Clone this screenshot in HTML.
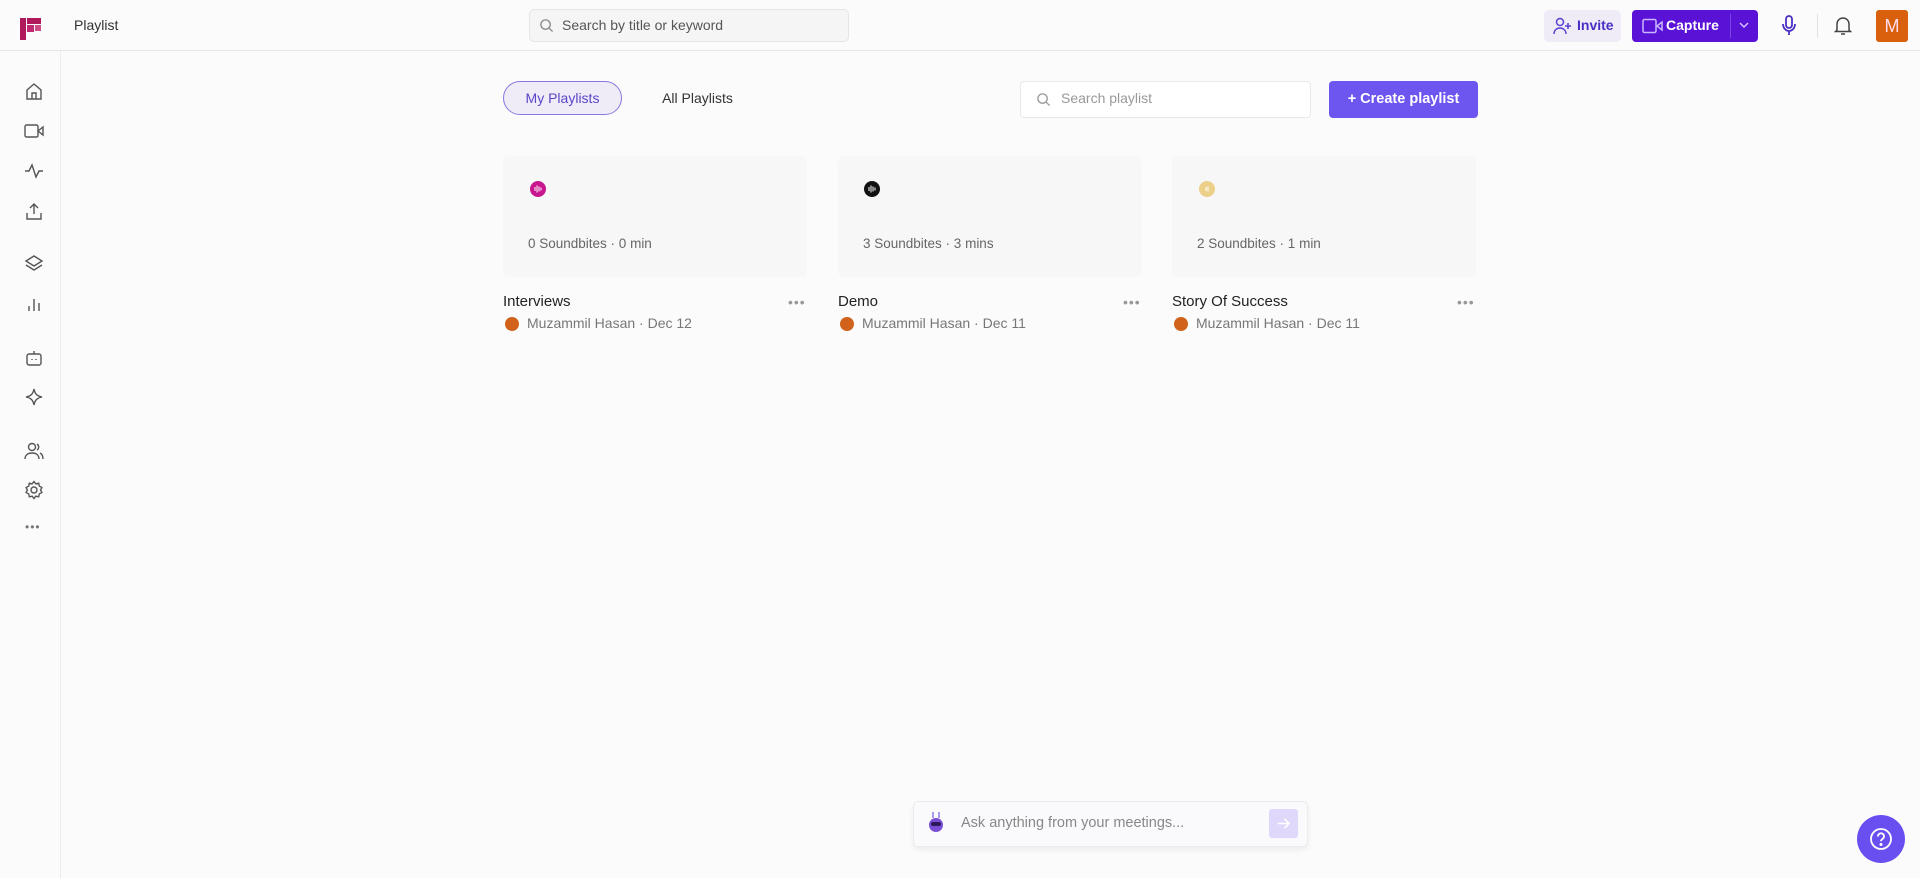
<!DOCTYPE html>
<html><head><meta charset="utf-8"><style>
*{box-sizing:border-box;margin:0;padding:0}
body{width:1920px;height:878px;background:#fbfbfb;font-family:"Liberation Sans",sans-serif;color:#222;position:relative;overflow:hidden}
.a{position:absolute}
.hdr{left:0;top:0;width:1920px;height:51px;border-bottom:1px solid #e6e6e6;background:#fbfbfb}
.side{left:0;top:51px;width:61px;height:827px;border-right:1px solid #ececec}
.ic{position:absolute;left:24px;width:20px;height:20px}
svg{display:block}
.card{top:156px;width:304px;height:121px;background:#f7f7f8;border-radius:6px}
.sb{font-size:13.5px;color:#666}
.tt{font-size:15px;color:#222}
.mt{font-size:14px;color:#777}
.av{width:14px;height:14px;border-radius:50%;background:#d0621c}
.more{color:#999;font-size:14px;letter-spacing:1px}
</style></head><body>
<div class="a hdr"></div>
<div class="a side"></div>
<svg class="a" style="left:20px;top:18px" width="22" height="22" viewBox="0 0 22 22"><rect x="0" y="0" width="6" height="22" fill="#b0195c"/><rect x="7" y="0" width="14" height="6" fill="#b0195c"/><rect x="7" y="7" width="7" height="7" fill="#c02a70"/><rect x="15" y="7" width="6" height="6" fill="#d04a85"/></svg>
<div class="a" style="left:74px;top:17px;font-size:14px;color:#333">Playlist</div>
<div class="a" style="left:529px;top:9px;width:320px;height:33px;border:1px solid #e6e6e6;border-radius:5px;background:#f5f5f6"></div>
<svg class="a" style="left:539px;top:18px" width="15" height="15" viewBox="0 0 16 16" fill="none" stroke="#888" stroke-width="1.4"><circle cx="7" cy="7" r="5"/><path d="M11 11l3.5 3.5"/></svg>
<div class="a" style="left:562px;top:17px;font-size:14px;color:#555">Search by title or keyword</div>
<div class="a" style="left:1544px;top:10px;width:77px;height:32px;border-radius:5px;background:#efecf8"></div>
<svg class="a" style="left:1553px;top:17px" width="20" height="18" viewBox="0 0 20 18" fill="none" stroke="#5b3fd1" stroke-width="1.5"><circle cx="7" cy="5" r="3.5"/><path d="M1 17c0-4 3-6 6-6s6 2 6 6M15 6v6M12 9h6"/></svg>
<div class="a" style="left:1577px;top:17px;font-size:14px;color:#4b2fc4;font-weight:bold">Invite</div>
<div class="a" style="left:1632px;top:10px;width:126px;height:32px;border-radius:4px;background:#5a12d6"></div>
<svg class="a" style="left:1642px;top:18px" width="22" height="16" viewBox="0 0 22 16" fill="none" stroke="#c9b6ff" stroke-width="1.5"><rect x="1" y="1.5" width="13" height="13" rx="1.5"/><path d="M15 8l5-4v8z"/></svg>
<div class="a" style="left:1666px;top:17px;font-size:14px;color:#fff;font-weight:bold">Capture</div>
<div class="a" style="left:1730px;top:14px;width:1px;height:24px;background:#7a45e0"></div>
<svg class="a" style="left:1739px;top:22px" width="10" height="7" viewBox="0 0 10 7" fill="none" stroke="#d6c8ff" stroke-width="1.4"><path d="M1 1l4 4 4-4"/></svg>
<svg class="a" style="left:1781px;top:15px" width="16" height="22" viewBox="0 0 16 22" fill="none" stroke="#4b2fc4" stroke-width="1.8"><rect x="5" y="1" width="6" height="12" rx="3"/><path d="M2 9c0 4 3 7 6 7s6-3 6-7M8 16v4"/></svg>
<div class="a" style="left:1817px;top:14px;width:1px;height:24px;background:#e3e3e3"></div>
<svg class="a" style="left:1834px;top:15px" width="18" height="21" viewBox="0 0 18 21" fill="none" stroke="#444" stroke-width="1.5"><path d="M3 15V9a6 6 0 0112 0v6l1.5 1.5h-15z"/><path d="M7 19h4"/></svg>
<div class="a" style="left:1876px;top:10px;width:32px;height:32px;border-radius:3px;background:#d9600c;color:#fde;font-size:18px;text-align:center;line-height:32px">M</div>
<svg class="ic" style="top:81px" viewBox="0 0 20 20" fill="none" stroke="#555" stroke-width="1.4"><path d="M3 9l7-6 7 6v9H3z"/><path d="M8 18v-6h4v6"/></svg>
<svg class="ic" style="top:121px" viewBox="0 0 20 20" fill="none" stroke="#555" stroke-width="1.4"><rect x="1" y="4" width="13" height="12" rx="1.5"/><path d="M14 10l5-4v8z"/></svg>
<svg class="ic" style="top:161px" viewBox="0 0 20 20" fill="none" stroke="#555" stroke-width="1.4"><path d="M1 10h4l3-6 4 12 3-6h4"/></svg>
<svg class="ic" style="top:201px" viewBox="0 0 20 20" fill="none" stroke="#555" stroke-width="1.4"><path d="M10 13V3M6 7l4-4 4 4M3 12v6h14v-6"/></svg>
<svg class="ic" style="top:254px" viewBox="0 0 20 20" fill="none" stroke="#555" stroke-width="1.4"><path d="M10 2l8 5-8 5-8-5z"/><path d="M2 11l8 5 8-5"/></svg>
<svg class="ic" style="top:294px" viewBox="0 0 20 20" fill="none" stroke="#555" stroke-width="1.4"><path d="M5 17v-5M10 17V5M15 17v-8"/></svg>
<svg class="ic" style="top:348px" viewBox="0 0 20 20" fill="none" stroke="#555" stroke-width="1.4"><rect x="3" y="6" width="14" height="11" rx="2"/><path d="M10 6V3M8 11v1M12 11v1"/></svg>
<svg class="ic" style="top:387px" viewBox="0 0 20 20" fill="none" stroke="#555" stroke-width="1.4"><path d="M10 2c1 5 3 7 8 8-5 1-7 3-8 8-1-5-3-7-8-8 5-1 7-3 8-8z"/></svg>
<svg class="ic" style="top:441px" viewBox="0 0 20 20" fill="none" stroke="#555" stroke-width="1.4"><circle cx="8" cy="6" r="3.5"/><path d="M1 18c0-4 3-6 7-6s7 2 7 6M13 3a3.5 3.5 0 010 6M16 12c2 1 3 3 3 6"/></svg>
<svg class="ic" style="top:480px" viewBox="0 0 20 20" fill="none" stroke="#555" stroke-width="1.4"><circle cx="10" cy="10" r="3"/><path d="M10 1.5l1.8 2.3 2.9-.6.6 2.9 2.6 1.4-1.3 2.5 1.3 2.5-2.6 1.4-.6 2.9-2.9-.6L10 18.5l-1.8-2.3-2.9.6-.6-2.9-2.6-1.4L3.4 10 2.1 7.5l2.6-1.4.6-2.9 2.9.6z"/></svg>
<div class="a" style="left:25px;top:520px;font-size:12px;color:#777;letter-spacing:1px">•••</div>
<div class="a" style="left:503px;top:81px;width:119px;height:34px;border:1px solid #8a78e0;border-radius:17px;background:#efecf8;color:#5b45c9;font-size:14px;text-align:center;line-height:32px">My Playlists</div>
<div class="a" style="left:647px;top:81px;width:101px;height:34px;border-radius:6px;color:#333;font-size:14px;text-align:center;line-height:34px">All Playlists</div>
<div class="a" style="left:1020px;top:81px;width:291px;height:37px;border:1px solid #e8e8e8;border-radius:4px;background:#fff"></div>
<svg class="a" style="left:1036px;top:92px" width="15" height="15" viewBox="0 0 16 16" fill="none" stroke="#999" stroke-width="1.4"><circle cx="7" cy="7" r="5"/><path d="M11 11l3.5 3.5"/></svg>
<div class="a" style="left:1061px;top:90px;font-size:14px;color:#999">Search playlist</div>
<div class="a" style="left:1329px;top:81px;width:149px;height:37px;border-radius:4px;background:#6d55f0;color:#fff;font-size:14.5px;font-weight:bold;text-align:center;line-height:37px">+ Create playlist</div>
<div class="a card" style="left:503px"></div>
<div class="a card" style="left:838px"></div>
<div class="a card" style="left:1172px"></div>
<svg class="a" style="left:530px;top:181px" width="16" height="16" viewBox="0 0 16 16"><circle cx="8" cy="8" r="8" fill="#c8168f"/><path d="M5 6v4M7 4.5v7M9 5.5v5M11 6.5v3" stroke="#fff" stroke-width="1"/></svg>
<svg class="a" style="left:864px;top:181px" width="16" height="16" viewBox="0 0 16 16"><circle cx="8" cy="8" r="8" fill="#111"/><path d="M5 6v4M7 4.5v7M9 5.5v5M11 6.5v3" stroke="#fff" stroke-width="1"/></svg>
<svg class="a" style="left:1199px;top:181px" width="16" height="16" viewBox="0 0 16 16"><circle cx="8" cy="8" r="8" fill="#ecd08a"/><path d="M7 6v4M9 5.5v5" stroke="#fff" stroke-width="1"/></svg>
<div class="a sb" style="left:528px;top:236px">0 Soundbites · 0 min</div>
<div class="a sb" style="left:863px;top:236px">3 Soundbites · 3 mins</div>
<div class="a sb" style="left:1197px;top:236px">2 Soundbites · 1 min</div>
<div class="a tt" style="left:503px;top:293px">Interviews</div>
<div class="a tt" style="left:838px;top:293px">Demo</div>
<div class="a tt" style="left:1172px;top:293px">Story Of Success</div>
<div class="a more" style="left:788px;top:294px">•••</div>
<div class="a more" style="left:1123px;top:294px">•••</div>
<div class="a more" style="left:1457px;top:294px">•••</div>
<div class="a av" style="left:505px;top:317px"></div>
<div class="a av" style="left:840px;top:317px"></div>
<div class="a av" style="left:1174px;top:317px"></div>
<div class="a mt" style="left:527px;top:315px">Muzammil Hasan · Dec 12</div>
<div class="a mt" style="left:862px;top:315px">Muzammil Hasan · Dec 11</div>
<div class="a mt" style="left:1196px;top:315px">Muzammil Hasan · Dec 11</div>
<div class="a" style="left:913px;top:801px;width:395px;height:46px;border:1px solid #ececec;border-radius:5px;background:#fafafc;box-shadow:0 3px 6px rgba(0,0,0,.06)"></div>
<svg class="a" style="left:928px;top:811px" width="16" height="22" viewBox="0 0 16 22"><path d="M5 1v6M11 1v6" stroke="#7c5ce0" stroke-width="1.2"/><ellipse cx="8" cy="14" rx="7" ry="7" fill="#7a4fd6"/><rect x="3" y="11" width="10" height="4" rx="2" fill="#2a1a5a"/></svg>
<div class="a" style="left:961px;top:815px;font-size:14.5px;color:#888">Ask anything from your meetings...</div>
<div class="a" style="left:1269px;top:809px;width:29px;height:29px;border-radius:3px;background:#e0d8fb"></div>
<svg class="a" style="left:1276px;top:816px" width="15" height="15" viewBox="0 0 16 16" fill="none" stroke="#fff" stroke-width="1.6"><path d="M2 8h12M9 3l5 5-5 5"/></svg>
<div class="a" style="left:1857px;top:815px;width:48px;height:48px;border-radius:50%;background:#6a4ff0"></div>
<svg class="a" style="left:1869px;top:827px" width="24" height="24" viewBox="0 0 24 24" fill="none" stroke="#fff" stroke-width="1.8"><circle cx="12" cy="12" r="10"/><path d="M9 9.5a3 3 0 115 2c-1 .8-2 1.3-2 2.8"/><circle cx="12" cy="17.5" r=".6" fill="#fff"/></svg>
</body></html>
